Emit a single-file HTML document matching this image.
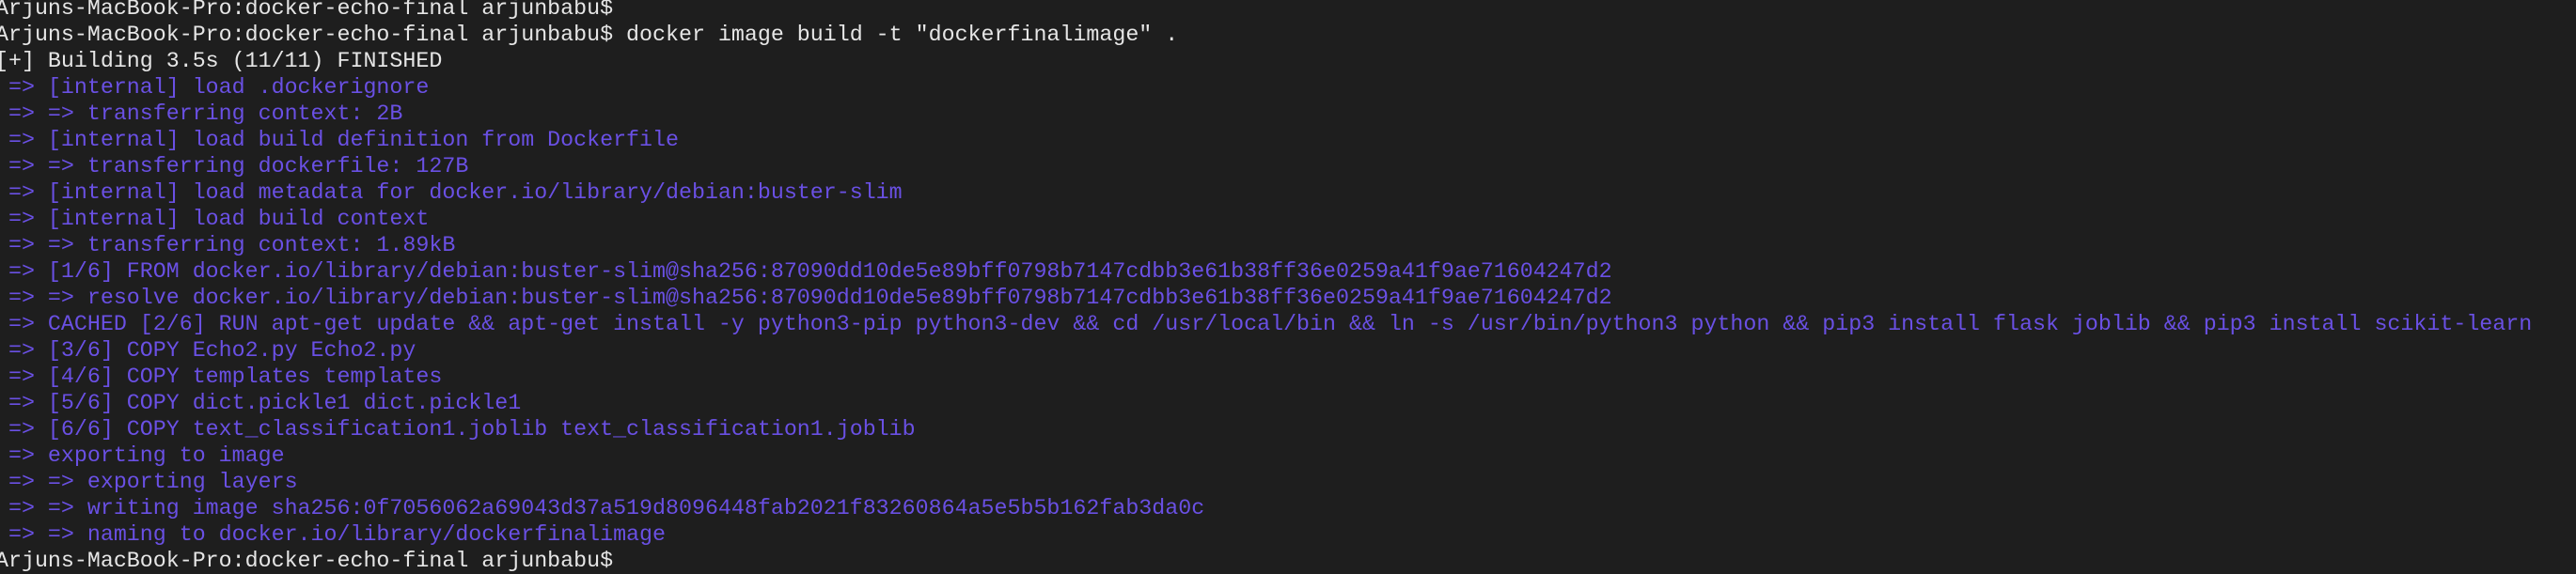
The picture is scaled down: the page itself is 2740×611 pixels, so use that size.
<!DOCTYPE html>
<html><head><meta charset="utf-8"><style>
html,body{margin:0;padding:0;background:#1e1e1e;width:2740px;height:592px;overflow:hidden}
pre{position:absolute;left:-5px;top:-5px;margin:0;font-family:"Liberation Mono",monospace;font-size:23.3px;line-height:28px;color:#e6e6e6;white-space:pre}
.p{color:#6a50e4}
</style></head><body><pre>Arjuns-MacBook-Pro:docker-echo-final arjunbabu$
Arjuns-MacBook-Pro:docker-echo-final arjunbabu$ docker image build -t "dockerfinalimage" .
[+] Building 3.5s (11/11) FINISHED
<span class="p"> => [internal] load .dockerignore
 => => transferring context: 2B
 => [internal] load build definition from Dockerfile
 => => transferring dockerfile: 127B
 => [internal] load metadata for docker.io/library/debian:buster-slim
 => [internal] load build context
 => => transferring context: 1.89kB
 => [1/6] FROM docker.io/library/debian:buster-slim@sha256:87090dd10de5e89bff0798b7147cdbb3e61b38ff36e0259a41f9ae71604247d2
 => => resolve docker.io/library/debian:buster-slim@sha256:87090dd10de5e89bff0798b7147cdbb3e61b38ff36e0259a41f9ae71604247d2
 => CACHED [2/6] RUN apt-get update &amp;&amp; apt-get install -y python3-pip python3-dev &amp;&amp; cd /usr/local/bin &amp;&amp; ln -s /usr/bin/python3 python &amp;&amp; pip3 install flask joblib &amp;&amp; pip3 install scikit-learn
 => [3/6] COPY Echo2.py Echo2.py
 => [4/6] COPY templates templates
 => [5/6] COPY dict.pickle1 dict.pickle1
 => [6/6] COPY text_classification1.joblib text_classification1.joblib
 => exporting to image
 => => exporting layers
 => => writing image sha256:0f7056062a69043d37a519d8096448fab2021f83260864a5e5b5b162fab3da0c
 => => naming to docker.io/library/dockerfinalimage</span>
Arjuns-MacBook-Pro:docker-echo-final arjunbabu$
</pre></body></html>
